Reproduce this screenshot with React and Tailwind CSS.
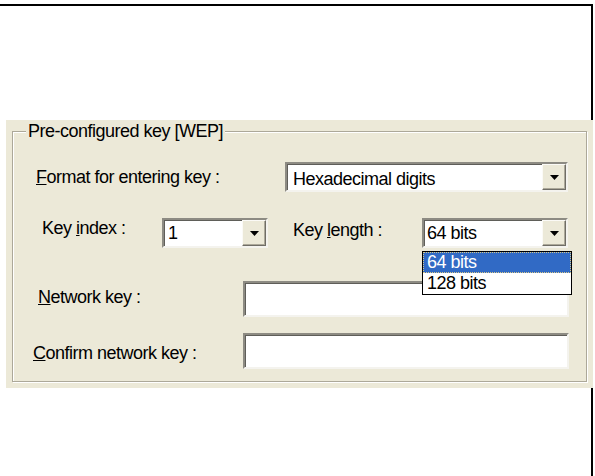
import React from "react";

const sunken =
  "border-2 border-t-[#8d8b83] border-l-[#8d8b83] border-r-[#f4f3ee] border-b-[#f4f3ee] shadow-[inset_1px_1px_0_#5f5e59] bg-white";

function Arrow() {
  return (
    <div className="w-[24px] h-full bg-[#ece9d8] border border-t-[#fbfaf6] border-l-[#fbfaf6] border-r-[#6f6d66] border-b-[#6f6d66] shadow-[inset_-1px_-1px_0_#aca899] flex items-center justify-center">
      <svg width="9" height="5" viewBox="0 0 9 5">
        <path d="M0 0H9L4.5 5Z" fill="#000" />
      </svg>
    </div>
  );
}

function Combo({ width, value, pt = "pt-[3px]", pl = "pl-[4px]", children }) {
  return (
    <div className={`relative h-[30px] ${width} ${sunken} flex`}>
      <div className={`flex-1 ${pl} ${pt} leading-[20px]`}>{value}</div>
      <Arrow />
      {children}
    </div>
  );
}

export default function App() {
  return (
    <div
      className="w-[595px] h-[476px] bg-white overflow-hidden text-black text-[18px] tracking-[-0.5px]"
      style={{ fontFamily: '"Liberation Sans", Arial, sans-serif' }}
    >
      <div className="mt-[4px] w-[593px] h-[472px] border-t-2 border-r-2 border-black pt-[114px]">
        <div className="ml-[6px] mr-[-2px] h-[268px] bg-[#ece9d8] pt-[11px]">
          <div className="relative mx-[6px] h-[251px] border border-[#aca899] shadow-[inset_1px_1px_0_#fff,1px_1px_0_#fff]">
            <span className="absolute top-[-11px] left-[13px] px-[2px] bg-[#ece9d8] leading-[20px]">
              Pre-configured key [WEP]
            </span>

            <div className="flex items-start h-[30px] mt-[30px]">
              <div className="w-[272px] pl-[23px] mt-[5px] leading-[20px]">
                <u>F</u>ormat for entering key :
              </div>
              <Combo width="w-[283px]" value="Hexadecimal digits" pl="pl-[6px]" pt="pt-[5px]" />
            </div>

            <div className="flex items-start h-[30px] mt-[26px]">
              <div className="w-[149px] pl-[29px] leading-[20px]">
                Key <u>i</u>ndex :
              </div>
              <Combo width="w-[106px]" value="1" />
              <div className="w-[129px] ml-[25px] mt-[2px] leading-[20px]">
                Key <u>l</u>ength :
              </div>
              <Combo width="w-[146px]" value="64 bits" pl="pl-[3px]">
                <div className="absolute left-[-2px] top-[31px] w-[150px] h-[44px] border border-black bg-white leading-[21px] z-10">
                  <div className="h-[21px] bg-[#316ac5] text-white pl-[4px] outline-1 outline-dotted outline-[#d8c88a] -outline-offset-1">
                    64 bits
                  </div>
                  <div className="h-[21px] pl-[4px]">128 bits</div>
                </div>
              </Combo>
            </div>

            <div className="flex items-start h-[36px] mt-[33px]">
              <div className="w-[230px] pl-[25px] mt-[6px] leading-[20px]">
                <u>N</u>etwork key :
              </div>
              <div className={`w-[326px] h-[36px] ${sunken}`} />
            </div>

            <div className="flex items-start h-[36px] mt-[16px]">
              <div className="w-[230px] pl-[20px] mt-[10px] leading-[20px]">
                <u>C</u>onfirm network key :
              </div>
              <div className={`w-[326px] h-[36px] ${sunken}`} />
            </div>
          </div>
        </div>
      </div>
    </div>
  );
}
